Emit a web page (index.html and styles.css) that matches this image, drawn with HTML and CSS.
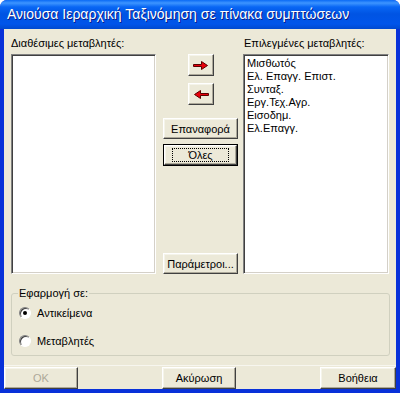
FILE: index.html
```html
<!DOCTYPE html>
<html lang="el">
<head>
    <meta charset="UTF-8">
    <title>Ανιούσα Ιεραρχική Ταξινόμηση σε πίνακα συμπτώσεων</title>
    <link rel="stylesheet" href="styles.css">
</head>
<body>
    <div class="window">
        <div class="titlebar">Ανιούσα Ιεραρχική Ταξινόμηση σε πίνακα συμπτώσεων</div>
        <div class="client">
            <div class="lists">
                <label class="list-label left-label">Διαθέσιμες μεταβλητές:</label>
                <label class="list-label right-label">Επιλεγμένες μεταβλητές:</label>
                <div class="listbox left-list"></div>
                <div class="middle">
                    <button class="btn arrow-btn" title="Προσθήκη">
                        <svg width="16" height="9" viewBox="0 0 16 9">
                            <path d="M0.5 3.5 H8.5 V0.5 L14.5 4.5 L8.5 8.5 V5.5 H0.5 Z" fill="#e8000b" stroke="#5a0000" stroke-width="1"/>
                        </svg>
                    </button>
                    <button class="btn arrow-btn" title="Αφαίρεση">
                        <svg width="16" height="9" viewBox="0 0 16 9">
                            <path d="M15.5 3.5 H7.5 V0.5 L1.5 4.5 L7.5 8.5 V5.5 H15.5 Z" fill="#e8000b" stroke="#5a0000" stroke-width="1"/>
                        </svg>
                    </button>
                    <button class="btn wide-btn reset-btn">Επαναφορά</button>
                    <button class="btn wide-btn default-btn"><span class="focus">Όλες</span></button>
                    <button class="btn wide-btn params-btn">Παράμετροι...</button>
                </div>
                <div class="listbox right-list">
                    <div class="item">Μισθωτός</div>
                    <div class="item">Ελ. Επαγγ. Επιστ.</div>
                    <div class="item">Συνταξ.</div>
                    <div class="item">Εργ.Τεχ.Αγρ.</div>
                    <div class="item">Εισοδημ.</div>
                    <div class="item">Ελ.Επαγγ.</div>
                </div>
            </div>

            <fieldset class="group">
                <legend>Εφαρμογή σε:</legend>
                <div class="radio-row">
                    <span class="radio checked"></span>
                    <span>Αντικείμενα</span>
                </div>
                <div class="radio-row">
                    <span class="radio"></span>
                    <span>Μεταβλητές</span>
                </div>
            </fieldset>

            <div class="bottom">
                <button class="btn bottom-btn" disabled>OK</button>
                <button class="btn bottom-btn">Ακύρωση</button>
                <button class="btn bottom-btn help-btn">Βοήθεια</button>
            </div>
        </div>
    </div>
</body>
</html>
```

FILE: styles.css
```css
body {
    margin: 0;
    font-family: "Liberation Sans", Arial, sans-serif;
    font-size: 11px;
    color: #000;
    background: #fff;
}

.window {
    width: 400px;
    height: 393px;
    display: flex;
    flex-direction: column;
    background: #0831d9;
    border-radius: 7px 7px 0 0;
    overflow: hidden;
}

.titlebar {
    height: 29px;
    flex: none;
    box-sizing: border-box;
    padding: 6px 0 0 7px;
    font-size: 14px;
    color: #fff;
    text-shadow: 1px 1px #0a1883;
    white-space: nowrap;
    background: linear-gradient(#0a6af5 0, #3d95ff 3px, #0866f4 7px, #0054e3 14px, #0055ea 24px, #0049cf 29px);
}

.client {
    flex: 1;
    margin: 0 4px 4px 4px;
    background: #ece9d8;
    display: flex;
    flex-direction: column;
}

/* top part: two lists and the buttons between */
.lists {
    display: grid;
    grid-template-columns: 145px 75px 146px;
    grid-template-rows: auto 220px;
    column-gap: 6px;
    padding: 8px 6px 0 7px;
}

.list-label {
    padding-bottom: 4px;
    line-height: 13px;
}

.left-label {
    grid-column: 1;
}

.right-label {
    grid-column: 3;
    padding-left: 1px;
}

.listbox {
    grid-row: 2;
    background: #fff;
    border-top: 1px solid #808080;
    border-left: 1px solid #808080;
    border-right: 1px solid #fff;
    border-bottom: 1px solid #fff;
    box-shadow: inset 1px 1px 0 #404040, inset -1px -1px 0 #d4d0c8;
    padding: 2px 3px;
}

.left-list {
    grid-column: 1;
}

.right-list {
    grid-column: 3;
}

.item {
    line-height: 13px;
    white-space: nowrap;
}

.middle {
    grid-column: 2;
    grid-row: 2;
    display: flex;
    flex-direction: column;
    align-items: center;
    padding-left: 2px;
}

.btn {
    font-family: inherit;
    font-size: 11px;
    color: #000;
    background: #ece9d8;
    padding: 0;
    border-top: 1px solid #fff;
    border-left: 1px solid #fff;
    border-right: 1px solid #404040;
    border-bottom: 1px solid #404040;
    box-shadow: inset -1px -1px 0 #aca899, inset 1px 1px 0 #f5f4ea;
    border-radius: 0;
    cursor: pointer;
    display: flex;
    align-items: center;
    justify-content: center;
}

.arrow-btn {
    width: 26px;
    height: 22px;
}

.arrow-btn + .arrow-btn {
    margin-top: 7px;
}

.wide-btn {
    width: 75px;
    height: 21px;
}

.reset-btn {
    margin-top: 13px;
}

.default-btn {
    margin-top: 6px;
    outline: 1px solid #000;
    outline-offset: 0;
    width: 73px;
    height: 20px;
}

.focus {
    border: 1px dotted #000;
    padding: 0 15px;
    line-height: 12px;
}

.params-btn {
    margin-top: auto;
}

/* group box */
.group {
    margin: 13px 6px 0 7px;
    padding: 7px 0 0 7px;
    height: 69px;
    box-sizing: border-box;
    border: 1px solid #d0d0bf;
    border-radius: 3px;
}

.group legend {
    padding: 0 1px;
    margin-left: -1px;
    line-height: 12px;
}

.radio-row {
    display: flex;
    align-items: center;
    gap: 6px;
    height: 14px;
    margin-bottom: 14px;
}

.radio {
    width: 12px;
    height: 12px;
    box-sizing: border-box;
    border-radius: 50%;
    background: #fff;
    border: 1px solid #808080;
    border-right-color: #fff;
    border-bottom-color: #fff;
    box-shadow: inset 1px 1px 0 #404040;
    display: flex;
    align-items: center;
    justify-content: center;
}

.radio.checked::after {
    content: "";
    width: 4px;
    height: 4px;
    border-radius: 50%;
    background: #000;
}

/* bottom buttons */
.bottom {
    margin-top: auto;
    display: flex;
    justify-content: space-between;
    border-top: 1px solid #f7f6ef;
    padding-top: 1px;
}

.bottom-btn {
    width: 74px;
    height: 22px;
}

.help-btn {
    width: 76px;
}

.bottom-btn:disabled {
    color: #aca899;
    cursor: default;
}
```
